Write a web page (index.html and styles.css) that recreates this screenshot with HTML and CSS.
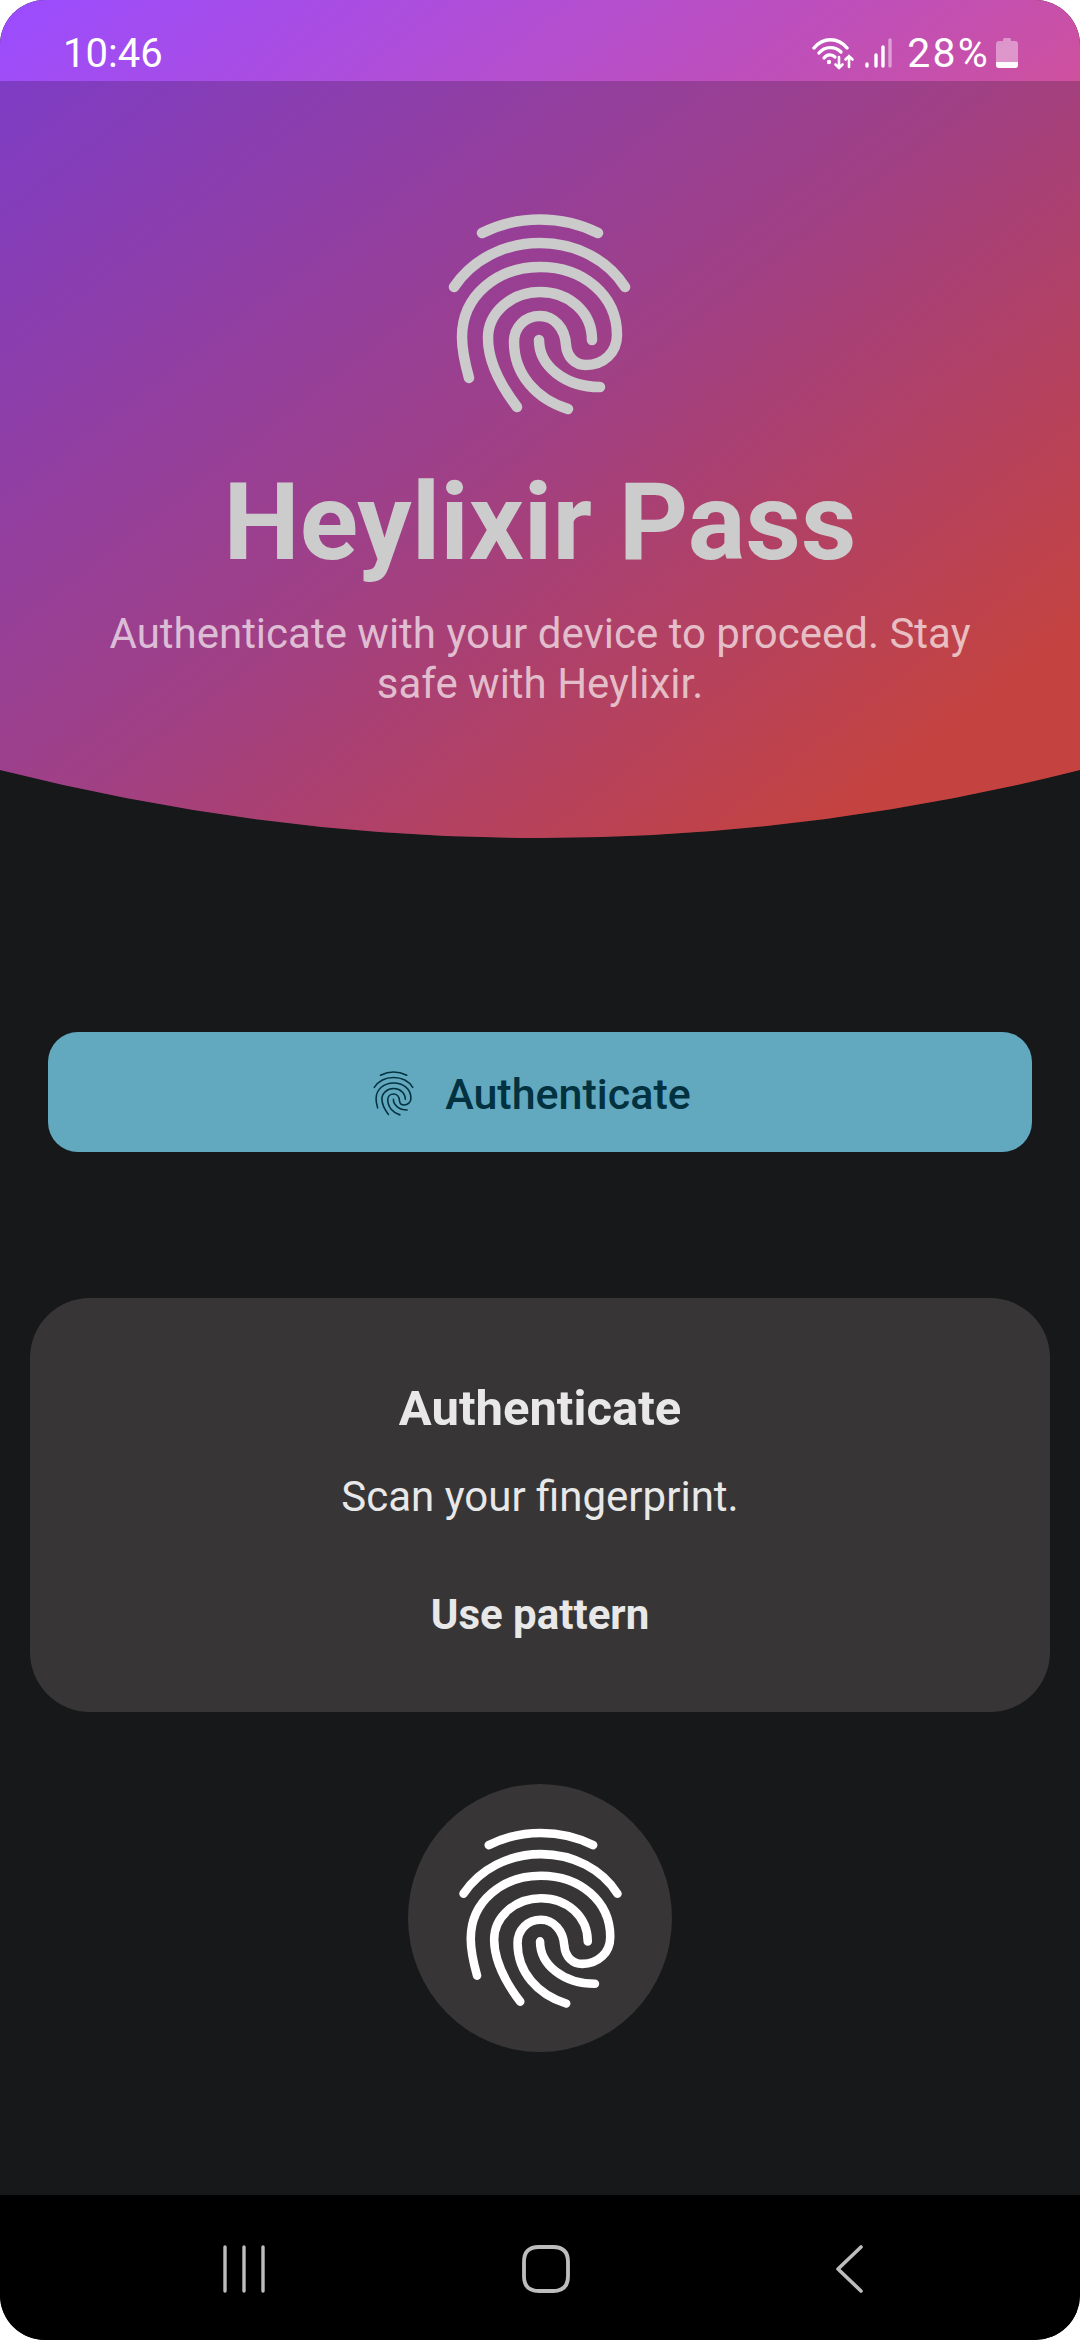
FILE: index.html
```html
<!DOCTYPE html>
<html lang="en">
<head>
<meta charset="utf-8">
<title>Heylixir Pass</title>
<link rel="stylesheet" href="styles.css">
</head>
<body>
<svg class="defs" width="0" height="0" aria-hidden="true">
  <defs>
    <g id="fp" fill="none" stroke-linecap="round" stroke-linejoin="round">
      <path d="M62 43C98 25 142 25 178 43"/>
      <path d="M34 97C52 70 84 53 120 53C156 53 188 70 205 97"/>
      <path d="M49 188C44 170 42 158 42 147C42 105 78 77 120 77C163 77 197 105 197 145C197 163 183 175 166 175C155 175 147 167 146 155C145 138 134 126 120 126C105 126 94 137 94 152C94 184 116 209 148 219"/>
      <path d="M97 217C78 192 68 170 68 148C68 122 92 102 120 102C149 102 172 122 172 150"/>
      <path d="M119 150C119 176 145 197 180 197"/>
    </g>
  </defs>
</svg>
<div class="screen">
  <header class="hero">
    <div class="status">
      <span class="time">10:46</span>
      <div class="status-right">
        <svg class="ic-wifi" viewBox="0 0 44 34" fill="none" stroke="#fff" stroke-linecap="round">
          <path d="M2 12C11 1 26 1 35 12" stroke-width="3.4"/>
          <path d="M7 17C13 10 23 10 29 16" stroke-width="3.4"/>
          <path d="M12 22C15 18 20 18 23 21" stroke-width="3.2"/>
          <circle cx="17" cy="26" r="2.2" fill="#fff" stroke="none"/>
          <path d="M27 21V32M23.500 28.500L27 32L30.500 28.500" stroke-width="2.6"/>
          <path d="M37 31V20M33.500 23.500L37 20L40.500 23.500" stroke-width="2.6"/>
        </svg>
        <svg class="ic-signal" viewBox="0 0 27 30" stroke-linecap="round" stroke="#fff" stroke-width="3.4">
          <path d="M2 28V26"/>
          <path d="M11 28V17"/>
          <path d="M18 28V9"/>
          <path d="M25 28V2" stroke-opacity=".45"/>
        </svg>
        <span class="pct">28%</span>
        <svg class="ic-batt" viewBox="0 0 22 31">
          <path d="M7 2.500C7 1.500 8 1 9 1H13C14 1 15 1.500 15 2.500V4H19C21 4 22 5 22 7V28C22 30 21 31 19 31H3C1 31 0 30 0 28V7C0 5 1 4 3 4H7Z" fill="#fff" fill-opacity=".4"/>
          <path d="M0 25H22V28C22 30 21 31 19 31H3C1 31 0 30 0 28Z" fill="#fff" fill-opacity=".95"/>
        </svg>
      </div>
    </div>
    <div class="hero-body">
      <svg class="fp-hero" viewBox="0 0 240 240"><use href="#fp"/></svg>
      <h1 class="title">Heylixir Pass</h1>
      <p class="subtitle">Authenticate with your device to proceed. Stay safe with Heylixir.</p>
    </div>
  </header>
  <main class="content">
    <button class="auth-btn" type="button">
      <svg class="fp-small" viewBox="29 24 181 200"><use href="#fp"/></svg>
      <span>Authenticate</span>
    </button>
    <section class="prompt">
      <h2 class="prompt-title">Authenticate</h2>
      <p class="prompt-text">Scan your fingerprint.</p>
      <p class="prompt-link">Use pattern</p>
    </section>
    <div class="sensor">
      <svg class="fp-sensor" viewBox="29 24 181 200"><use href="#fp"/></svg>
    </div>
  </main>
  <nav class="navbar">
    <svg class="nav-recent" viewBox="0 0 44 48" fill="none" stroke="#bdbdbd" stroke-width="3.400" stroke-linecap="round"><path d="M2 2V46M21 2V46M40 2V46"/></svg>
    <svg class="nav-home" viewBox="0 0 48 48" fill="none" stroke="#bdbdbd" stroke-width="3.800"><path d="M17 2H31C41 2 46 7 46 17V31C46 41 41 46 31 46H17C7 46 2 41 2 31V17C2 7 7 2 17 2Z"/></svg>
    <svg class="nav-back" viewBox="0 0 27 48" fill="none" stroke="#bdbdbd" stroke-width="3.600" stroke-linecap="round" stroke-linejoin="round"><path d="M25 2L2 24L25 46"/></svg>
  </nav>
</div>
</body>
</html>
```

FILE: styles.css
```css
* { box-sizing: border-box; margin: 0; padding: 0; }
html, body { width: 1080px; height: 2340px; background: #fff; overflow: hidden; }
body { font-family: Roboto, "Liberation Sans", sans-serif; }
.defs { display: block; height: 0; }

.screen {
  width: 1080px;
  height: 2340px;
  display: flex;
  flex-direction: column;
  background: #161819;
  border-radius: 45px;
  overflow: hidden;
}

.hero {
  flex: 0 0 838px;
  display: flex;
  flex-direction: column;
  background: linear-gradient(to bottom right, #9a4cff 0%, #c850a8 50%, #f65450 88%);
  clip-path: path("M0 0H1080V770Q540 906 0 770Z");
}
.status {
  flex: 0 0 81px;
  display: flex;
  align-items: center;
  justify-content: space-between;
  padding: 0 62px 0 63px;
  color: #fff;
}
.time { font-size: 40px; line-height: 46px; margin-top: 26px; }
.status-right { display: flex; align-items: center; margin-top: 24px; }
.ic-wifi { width: 44px; height: 34px; margin-right: 9px; }
.ic-signal { width: 27px; height: 30px; margin-right: 15px; }
.pct { font-size: 41px; line-height: 46px; letter-spacing: 2.200px; margin-right: 6px; }
.ic-batt { width: 22px; height: 31px; }

.hero-body {
  flex: 1;
  display: flex;
  flex-direction: column;
  align-items: center;
  background: rgba(0, 0, 0, 0.2);
  padding-top: 109px;
}
.fp-hero { width: 240px; height: 240px; stroke: #cbcbcb; stroke-width: 10.500; display: block; }
.title {
  font-size: 108px;
  line-height: 124px;
  font-weight: 700;
  color: #cccccc;
  margin-top: 30px;
}
.subtitle {
  width: 900px;
  text-align: center;
  font-size: 42px;
  line-height: 50px;
  color: rgba(255, 255, 255, 0.66);
  margin-top: 25px;
}

.content {
  flex: 1;
  display: flex;
  flex-direction: column;
  align-items: center;
  padding-top: 194px;
}
.auth-btn {
  width: 984px;
  height: 120px;
  border: 0;
  border-radius: 30px;
  background: #62a9bf;
  color: #02313f;
  font-family: inherit;
  font-size: 43px;
  font-weight: 500;
  display: flex;
  align-items: center;
  justify-content: center;
  gap: 31px;
  padding: 3px 16px 0 0;
}
.fp-small { width: 41px; height: 45px; stroke: #02313f; stroke-width: 7; }

.prompt {
  width: 1020px;
  height: 414px;
  margin-top: 146px;
  border-radius: 60px;
  background: #373536;
  color: #e8e8e8;
  text-align: center;
  padding-top: 83px;
}
.prompt-title { font-size: 49px; line-height: 56px; font-weight: 700; }
.prompt-text { font-size: 42px; line-height: 50px; margin-top: 35px; }
.prompt-link { font-size: 42px; line-height: 50px; font-weight: 700; margin-top: 68px; }

.sensor {
  width: 264px;
  height: 268px;
  margin-top: 72px;
  border-radius: 50%;
  background: #373536;
  display: flex;
  align-items: center;
  justify-content: center;
}
.fp-sensor { width: 163px; height: 180px; stroke: #fff; stroke-width: 9.500; }

.navbar {
  flex: 0 0 145px;
  background: #000;
  display: flex;
  align-items: flex-start;
  padding-top: 50px;
}
.nav-recent { width: 44px; height: 48px; margin-left: 223px; }
.nav-home { width: 48px; height: 48px; margin-left: 255px; }
.nav-back { width: 27px; height: 48px; margin-left: 266px; }
```
